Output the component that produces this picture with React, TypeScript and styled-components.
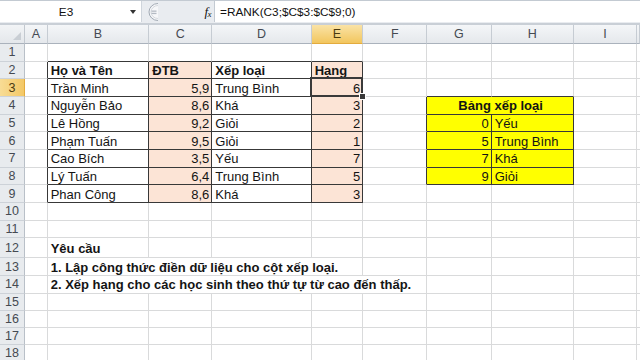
import React from 'react';
import styled, { createGlobalStyle } from 'styled-components';

const GlobalStyle = createGlobalStyle`
  html, body { margin: 0; padding: 0; background: #fff; overflow: hidden; }
  body { width: 640px; height: 360px; font-family: "Liberation Sans", Arial, sans-serif; }
`;

const Screen = styled.div`
  width: 640px;
  height: 360px;
  overflow: hidden;
  display: flex;
  flex-direction: column;
  background: #fff;
`;

const FormulaBar = styled.div`
  height: 25px;
  flex: none;
  box-sizing: border-box;
  display: flex;
  align-items: stretch;
  background: #e9ecf0;
  border-top: 1px solid #c3cad2;
  border-bottom: 2px solid #c9cfd6;
  padding-bottom: 1px;
`;

const NameBox = styled.div`
  width: 141px;
  flex: none;
  display: flex;
  align-items: center;
  background: #fff;
  border-right: 1px solid #cfd5dc;
  font-size: 11.8px;
  color: #111;
`;

const NameText = styled.span`
  flex: 1;
  text-align: center;
  padding-left: 2px;
`;

const DropArrow = styled.span`
  width: 0;
  height: 0;
  margin: 1px 5px 0 0;
  border-left: 3px solid transparent;
  border-right: 3px solid transparent;
  border-top: 4px solid #333;
`;

const Toggle = styled.div`
  width: 18px;
  flex: none;
  display: flex;
  align-items: center;
  justify-content: flex-start;
  padding-left: 1px;
`;

const FxArea = styled.div`
  flex: none;
  width: 53px;
  display: flex;
  align-items: center;
  justify-content: flex-end;
  padding-right: 3px;
  box-sizing: border-box;
`;

const Fx = styled.span`
  font-family: "Liberation Serif", "Times New Roman", serif;
  font-style: italic;
  font-size: 13px;
  color: #111;
  letter-spacing: -0.5px;
  sub {
    font-size: 9px;
    vertical-align: -1px;
  }
`;

const FormulaInput = styled.div`
  flex: 1;
  background: #fff;
  border-left: 1px solid #c3cad2;
  display: flex;
  align-items: center;
  padding-left: 5px;
  font-size: 11.8px;
  color: #111;
  white-space: nowrap;
`;

const Sheet = styled.div<{ $cols: string; $rows: string }>`
  flex: none;
  display: grid;
  grid-template-columns: ${(p) => p.$cols};
  grid-template-rows: ${(p) => p.$rows};
`;

const Corner = styled.div`
  box-sizing: border-box;
  position: relative;
  background: linear-gradient(#f2f4f6, #e4e7eb);
  border-right: 1px solid #c2c8cf;
  border-bottom: 1px solid #aab2bc;
`;

const CornerTriangle = styled.span`
  position: absolute;
  right: 3px;
  bottom: 3px;
  width: 0;
  height: 0;
  border-left: 8px solid transparent;
  border-bottom: 8px solid #c9ced4;
`;

const ColHeader = styled.div<{ $active?: boolean }>`
  box-sizing: border-box;
  display: flex;
  align-items: center;
  justify-content: center;
  font-size: 12.5px;
  color: ${(p) => (p.$active ? '#4a3a10' : '#454a52')};
  background: ${(p) =>
    p.$active ? 'linear-gradient(#fae3a6, #f2c65e)' : 'linear-gradient(#f4f6f8, #e5e8ec)'};
  border-right: 1px solid #c6ccd3;
  border-bottom: 1px solid ${(p) => (p.$active ? '#e3ab3e' : '#aab2bc')};
  overflow: hidden;
`;

const RowHeader = styled.div<{ $active?: boolean }>`
  box-sizing: border-box;
  display: flex;
  align-items: center;
  justify-content: center;
  font-size: 12.5px;
  color: ${(p) => (p.$active ? '#4a3a10' : '#454a52')};
  background: ${(p) => (p.$active ? 'linear-gradient(90deg, #f8dc95, #f3c866)' : '#e8ebee')};
  border-right: 1px solid ${(p) => (p.$active ? '#e3ab3e' : '#b9c0c8')};
  border-bottom: 1px solid #cdd2d8;
`;

type Align = 'left' | 'right' | 'center';

const Cell = styled.div<{
  $right: string;
  $bottom: string;
  $fill?: string;
  $align?: Align;
  $bold?: boolean;
  $span?: number;
}>`
  box-sizing: border-box;
  position: relative;
  min-width: 0;
  grid-column: span ${(p) => p.$span ?? 1};
  display: flex;
  align-items: center;
  justify-content: ${(p) =>
    p.$align === 'right' ? 'flex-end' : p.$align === 'center' ? 'center' : 'flex-start'};
  padding: 1px 2px 0 3px;
  background: ${(p) => p.$fill ?? 'transparent'};
  border-right: 1px solid ${(p) => p.$right};
  border-bottom: 1px solid ${(p) => p.$bottom};
  font-size: 13px;
  font-weight: ${(p) => (p.$bold ? 700 : 400)};
  color: #141414;
  white-space: nowrap;
`;

const Selection = styled.span`
  position: absolute;
  left: -2px;
  top: -2px;
  right: -1px;
  bottom: -1px;
  border: 2px solid #3a3a3a;
  pointer-events: none;
  z-index: 2;
`;

const FillHandle = styled.span`
  position: absolute;
  right: -4px;
  bottom: -4px;
  width: 5px;
  height: 5px;
  background: #3a3a3a;
  border: 1px solid #fff;
  z-index: 3;
`;

const COLS = ['A', 'B', 'C', 'D', 'E', 'F', 'G', 'H', 'I', 'J'];
const COL_W = [22.7, 101.6, 63, 99.4, 51.6, 64, 64.4, 82.3, 63.3, 2.7];
const ROW_H = [
  17.66, 17.66, 17.66, 17.66, 17.66, 17.66, 17.66, 17.66, 17.66, 17.66, 17.66,
  20, 17.85, 17.85, 16.9, 16.9, 16.9, 16.9,
];

const PEACH = '#fce4d6';
const YELLOW = '#ffff00';
const GRID = '#d9dadb';
const DARK = '#383838';

type CellData = { v: string; bold?: boolean; align?: Align; fill?: string; span?: number };

const data: Record<string, CellData> = {
  B2: { v: 'Họ và Tên', bold: true },
  C2: { v: 'ĐTB', bold: true, fill: PEACH },
  D2: { v: 'Xếp loại', bold: true },
  E2: { v: 'Hạng', bold: true, fill: PEACH },
  G4: { v: 'Bảng xếp loại', bold: true, align: 'center', fill: YELLOW, span: 2 },
  B12: { v: 'Yêu cầu', bold: true },
  B13: { v: '1. Lập công thức điền dữ liệu cho cột xếp loại.', bold: true, span: 4 },
  B14: { v: '2. Xếp hạng cho các học sinh theo thứ tự từ cao đến thấp.', bold: true, span: 5 },
};

const students: [string, string, string, string][] = [
  ['Trần Minh', '5,9', 'Trung Bình', '6'],
  ['Nguyễn Bảo', '8,6', 'Khá', '3'],
  ['Lê Hồng', '9,2', 'Giỏi', '2'],
  ['Phạm Tuấn', '9,5', 'Giỏi', '1'],
  ['Cao Bích', '3,5', 'Yếu', '7'],
  ['Lý Tuấn', '6,4', 'Trung Bình', '5'],
  ['Phan Công', '8,6', 'Khá', '3'],
];
students.forEach(([name, score, rank, pos], i) => {
  const r = i + 3;
  data[`B${r}`] = { v: name };
  data[`C${r}`] = { v: score, align: 'right', fill: PEACH };
  data[`D${r}`] = { v: rank };
  data[`E${r}`] = { v: pos, align: 'right', fill: PEACH };
});

const scale: [string, string][] = [
  ['0', 'Yếu'],
  ['5', 'Trung Bình'],
  ['7', 'Khá'],
  ['9', 'Giỏi'],
];
scale.forEach(([min, label], i) => {
  const r = i + 5;
  data[`G${r}`] = { v: min, align: 'right', fill: YELLOW };
  data[`H${r}`] = { v: label, fill: YELLOW };
});

const tables = [
  { r1: 2, r2: 9, c1: 1, c2: 4 },
  { r1: 4, r2: 8, c1: 6, c2: 7 },
];
const inTable = (r: number, c: number) =>
  tables.some((t) => r >= t.r1 && r <= t.r2 && c >= t.c1 && c <= t.c2);

const ACTIVE = { r: 3, c: 4 };

function Toggler() {
  return (
    <svg width="16" height="20" viewBox="0 0 16 20">
      <path d="M15 1.5 A 9 8.5 0 0 0 15 18.5" fill="#f6f7f9" stroke="#a2aab4" strokeWidth="1" />
      <path d="M15 3.5 A 7 6.5 0 0 0 15 16.5" fill="none" stroke="#d5d9de" strokeWidth="1" />
      <rect x="8.5" y="8.5" width="5" height="1.3" fill="#b3bac3" />
      <rect x="8.5" y="10.8" width="5" height="1.3" fill="#b3bac3" />
    </svg>
  );
}

export default function App() {
  const cols = `25px ${COL_W.map((w) => `${w}px`).join(' ')}`;
  const rows = `19px ${ROW_H.map((h) => `${h}px`).join(' ')}`;

  const cells: React.ReactNode[] = [];
  cells.push(
    <Corner key="corner">
      <CornerTriangle />
    </Corner>
  );
  COLS.forEach((name, c) => {
    cells.push(
      <ColHeader key={`h${name}`} $active={c === ACTIVE.c}>
        {c < 9 ? name : ''}
      </ColHeader>
    );
  });

  ROW_H.forEach((_, i) => {
    const r = i + 1;
    cells.push(
      <RowHeader key={`r${r}`} $active={r === ACTIVE.r}>
        {r}
      </RowHeader>
    );
    let c = 0;
    while (c < COLS.length) {
      const d = data[`${COLS[c]}${r}`];
      const span = d?.span ?? 1;
      const cEnd = c + span - 1;
      const right = inTable(r, cEnd) || inTable(r, cEnd + 1) ? DARK : GRID;
      const bottom = inTable(r, c) || inTable(r + 1, c) ? DARK : GRID;
      const active = r === ACTIVE.r && c === ACTIVE.c;
      cells.push(
        <Cell
          key={`${COLS[c]}${r}`}
          $right={right}
          $bottom={bottom}
          $fill={d?.fill}
          $align={d?.align}
          $bold={d?.bold}
          $span={span}
        >
          {d?.v}
          {active && (
            <>
              <Selection />
              <FillHandle />
            </>
          )}
        </Cell>
      );
      c += span;
    }
  });

  return (
    <Screen>
      <GlobalStyle />
      <FormulaBar>
        <NameBox>
          <NameText>E3</NameText>
          <DropArrow />
        </NameBox>
        <Toggle>
          <Toggler />
        </Toggle>
        <FxArea>
          <Fx>
            f<sub>x</sub>
          </Fx>
        </FxArea>
        <FormulaInput>=RANK(C3;$C$3:$C$9;0)</FormulaInput>
      </FormulaBar>
      <Sheet $cols={cols} $rows={rows}>
        {cells}
      </Sheet>
    </Screen>
  );
}
